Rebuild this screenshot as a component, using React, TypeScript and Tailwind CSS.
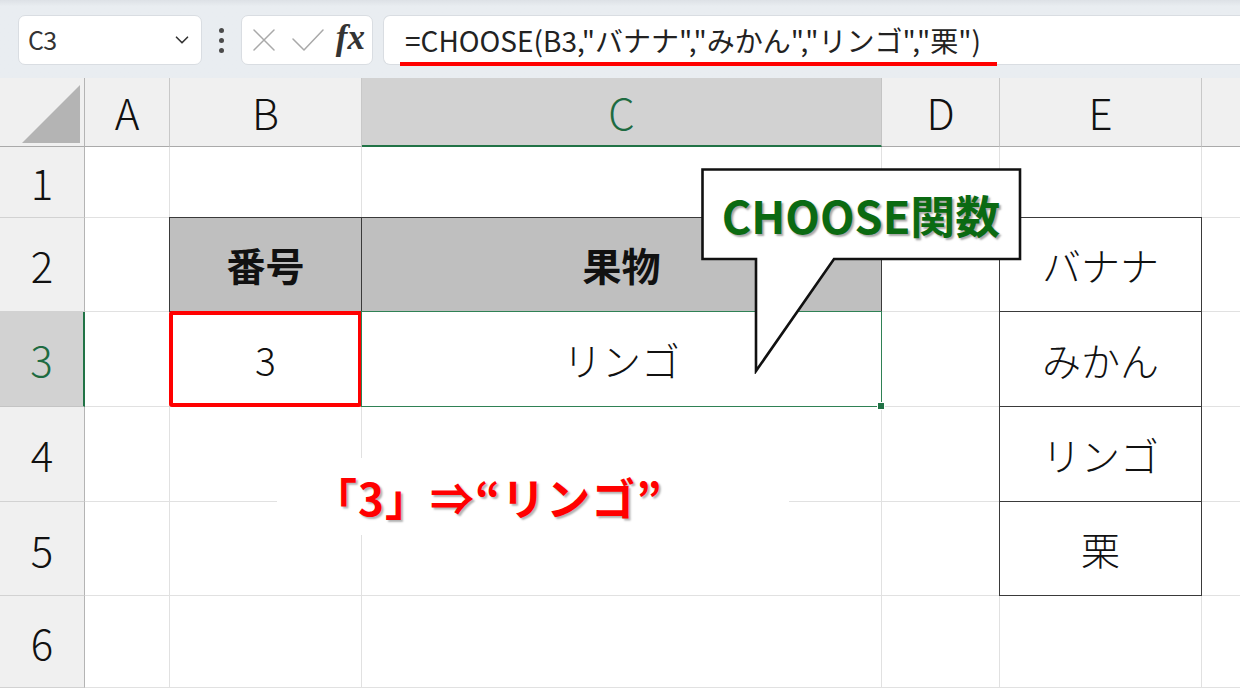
import { ChevronDown } from "lucide-react";
import type { ReactNode } from "react";

const font = "font-['Noto_Sans_CJK_JP','Noto_Sans',sans-serif]";

function Head({ children, active = false, className = "" }: { children?: ReactNode; active?: boolean; className?: string }) {
  return (
    <div
      className={`flex items-center justify-center text-[42px] font-light leading-none border-r border-b ${
        active
          ? "bg-[#d2d2d2] text-[#1e6b41] border-r-[#c4c4c4] border-b-2 border-b-[#217346]"
          : "bg-[#f0f0f0] text-[#111] border-r-[#c8c8c8] border-b-[#aaaaaa]"
      } ${className}`}
    >
      {children}
    </div>
  );
}

function RowHead({ n, active = false }: { n: number; active?: boolean }) {
  return (
    <div
      className={`flex items-center justify-center text-[42px] font-light leading-none border-b ${
        active
          ? "bg-[#d2d2d2] text-[#1e6b41] border-r-2 border-r-[#217346] border-b-[#c4c4c4]"
          : "bg-[#f0f0f0] text-[#111] border-r border-r-[#b4b4b4] border-b-[#d2d2d2]"
      }`}
    >
      {n}
    </div>
  );
}

function Cell({ children, className = "", boxed = false }: { children?: ReactNode; className?: string; boxed?: boolean }) {
  return (
    <div className={`relative flex items-center justify-center text-[39px] leading-none text-[#111] border-r border-b border-[#e1e1e1] ${className}`}>
      {boxed && <div className="absolute -inset-px border-[1.5px] border-[#3a3a3a] z-10" />}
      {children}
    </div>
  );
}

export default function App() {
  return (
    <div className={`relative w-[1240px] h-[688px] overflow-hidden bg-white ${font}`}>
      {/* formula bar */}
      <div className="h-[78px] bg-gradient-to-b from-[#dde1e6] via-[#e9edf1] via-[8%] to-[#e9edf1] flex items-center pt-[2px] pl-[18px]">
        <div className="w-[184px] h-[50px] bg-white rounded-[7px] border border-[#d9dde2] flex items-center justify-between pl-[9px] pr-[8px]">
          <span className="text-[25px] text-[#333] tracking-tight">C3</span>
          <ChevronDown size={22} strokeWidth={1.8} className="text-[#333]" />
        </div>
        <div className="w-[39px] flex flex-col items-center gap-[5px]">
          <span className="w-[5px] h-[5px] rounded-full bg-[#4b4b4b]" />
          <span className="w-[5px] h-[5px] rounded-full bg-[#4b4b4b]" />
          <span className="w-[5px] h-[5px] rounded-full bg-[#4b4b4b]" />
        </div>
        <div className="w-[132px] h-[50px] bg-white rounded-[7px] border border-[#d9dde2] flex items-center pl-[11px] pr-[7px]">
          <svg width="22" height="22" viewBox="0 0 22 22" fill="none" stroke="#a9a9a9" strokeWidth="1.5" strokeLinecap="round">
            <path d="M1 1 21 21M21 1 1 21" />
          </svg>
          <svg className="ml-[17px]" width="32" height="22" viewBox="0 0 32 22" fill="none" stroke="#a9a9a9" strokeWidth="1.5" strokeLinecap="round" strokeLinejoin="round">
            <path d="M1 10 12 21 31 1" />
          </svg>
          <span className="ml-auto text-[35px] leading-none italic font-bold font-['Liberation_Serif',serif] text-[#333] -mt-[5px]">
            fx
          </span>
        </div>
        <div className="ml-[10px] flex-1 h-[50px] bg-white rounded-l-[7px] border border-r-0 border-[#d9dde2] flex items-center pl-[21px] relative">
          <span className="text-[28px] text-[#222] leading-none whitespace-nowrap">
            =CHOOSE(B3,"バナナ","みかん","リンゴ","栗")
          </span>
          <div className="absolute left-[16px] top-[46px] w-[597px] h-[4px] bg-[#ff0000]" />
        </div>
      </div>

      {/* sheet */}
      <div className="grid grid-cols-[85px_85px_192px_520px_118px_202px_38px] grid-rows-[69px_71px_94px_95px_95px_94px_92px]">
        <div className="relative bg-[#f0f0f0] border-r border-b border-r-[#b4b4b4] border-b-[#aaaaaa]">
          <svg className="absolute left-[20px] top-[5px]" width="62" height="62" viewBox="0 0 62 62">
            <polygon points="2,60 60,2 60,60" fill="#b4b4b4" />
          </svg>
        </div>
        <Head>A</Head>
        <Head>B</Head>
        <Head active>C</Head>
        <Head>D</Head>
        <Head>E</Head>
        <Head className="border-r-0" />

        <RowHead n={1} />
        <Cell />
        <Cell />
        <Cell />
        <Cell />
        <Cell />
        <Cell className="border-r-0" />

        <RowHead n={2} />
        <Cell />
        <Cell boxed className="bg-[#bfbfbf] font-bold">
          番号
        </Cell>
        <Cell boxed className="bg-[#bfbfbf] font-bold">
          果物
        </Cell>
        <Cell />
        <Cell boxed className="font-light">バナナ</Cell>
        <Cell className="border-r-0" />

        <RowHead n={3} active />
        <Cell />
        <Cell className="font-light">
          <div className="absolute -inset-px border-4 border-[#ff0000] rounded-[3px] z-20" />
          3
        </Cell>
        <Cell className="font-light">
          <div className="absolute -inset-px border-[1.5px] border-[#2f8155] z-20" />
          <div className="absolute -right-[4px] -bottom-[4px] w-[8px] h-[8px] bg-[#217346] border border-white z-30" />
          リンゴ
        </Cell>
        <Cell />
        <Cell boxed className="font-light">みかん</Cell>
        <Cell className="border-r-0" />

        <RowHead n={4} />
        <Cell />
        <Cell />
        <Cell />
        <Cell />
        <Cell boxed className="font-light">リンゴ</Cell>
        <Cell className="border-r-0" />

        <RowHead n={5} />
        <Cell />
        <Cell />
        <Cell />
        <Cell />
        <Cell boxed className="font-light">栗</Cell>
        <Cell className="border-r-0" />

        <RowHead n={6} />
        <Cell />
        <Cell />
        <Cell />
        <Cell />
        <Cell />
        <Cell className="border-r-0" />
      </div>

      {/* callout */}
      <div className="absolute left-[700px] top-[167px] w-[323px] h-[207px] z-40">
        <svg className="absolute inset-0" width="323" height="207" viewBox="0 0 323 207">
          <path d="M2.5 2.5 H320 V92 H134 L56 204 V92 H2.5 Z" fill="#fff" stroke="#111" strokeWidth="2.6" strokeLinejoin="miter" />
        </svg>
        <div className="absolute left-0 top-0 w-[322px] h-[94px] flex items-center justify-center text-[45px] font-bold text-[#0b6a12] leading-none [text-shadow:2px_2px_2px_rgba(0,0,0,0.35)]">
          CHOOSE関数
        </div>
      </div>

      {/* annotation */}
      <div className="absolute left-[277px] top-[458px] w-[512px] h-[77px] bg-white z-40 flex items-center pl-[36px]">
        <span className="text-[44px] font-bold text-[#ff0000] leading-none whitespace-nowrap tracking-[1px] [text-shadow:2px_2px_2px_rgba(0,0,0,0.3)]">
          「3」⇒“リンゴ”
        </span>
      </div>
    </div>
  );
}
